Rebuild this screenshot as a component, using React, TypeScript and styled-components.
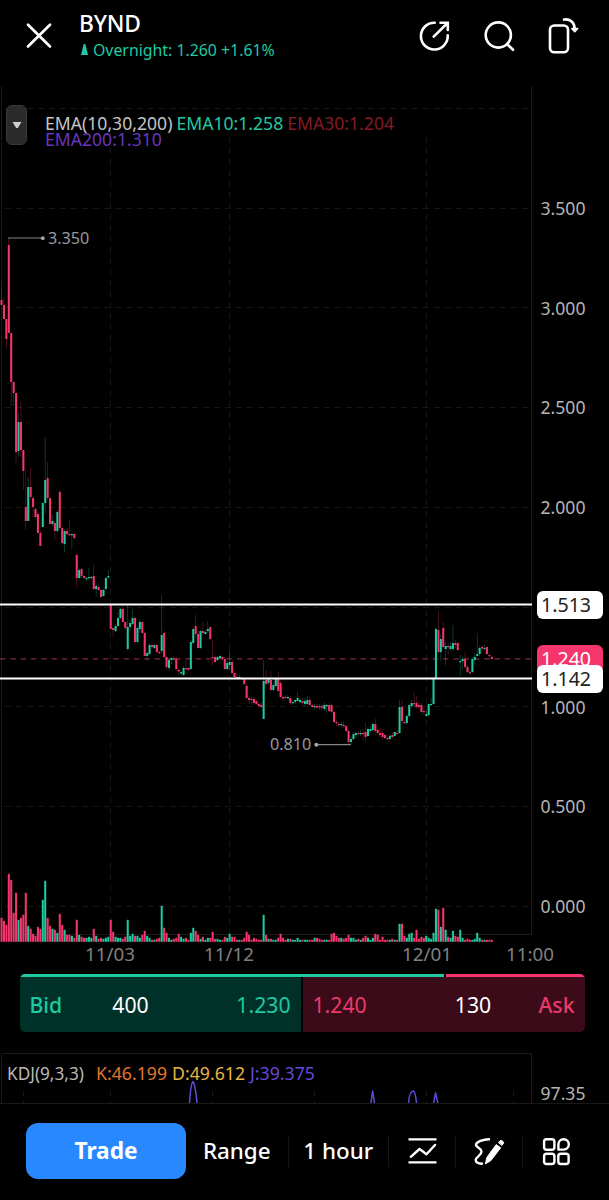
import React from "react";
import styled, { createGlobalStyle } from "styled-components";

const GREEN = "#1fc9a2";
const PINK = "#f4366c";

const GlobalStyle = createGlobalStyle`
  * { box-sizing: border-box; }
  body { margin: 0; background: #000; }
`;

const Screen = styled.main`
  width: 609px;
  height: 1200px;
  overflow: hidden;
  display: flex;
  flex-direction: column;
  background: #000;
  color: #fff;
  font-family: "Noto Sans", "Open Sans", sans-serif;
  white-space: nowrap;
`;

const Header = styled.header`
  flex: none;
  height: 86px;
  display: flex;
  align-items: flex-start;
  padding: 9px 29px 0 24px;
`;

const IconButton = styled.button<{ $w?: number; $h?: number }>`
  width: ${(p) => p.$w ?? 34}px;
  height: ${(p) => p.$h ?? 34}px;
  padding: 0;
  border: 0;
  background: none;
  color: #fff;
  display: flex;
  align-items: center;
  justify-content: center;

  svg {
    flex: none;
  }
`;

const CloseButton = styled(IconButton)`
  margin-top: 11px;
`;

const Title = styled.div`
  margin-left: 25px;
  margin-top: 2px;
  flex: 1;
`;

const Symbol = styled.h1`
  margin: 0;
  font-size: 22.8px;
  line-height: 26px;
  height: 26px;
  font-weight: 500;
  letter-spacing: -0.2px;
`;

const Overnight = styled.div`
  display: flex;
  align-items: center;
  gap: 5px;
  padding-left: 2px;
  margin-top: 2px;
  font-size: 15.85px;
  line-height: 22px;
  color: ${GREEN};
`;

const HeaderActions = styled.div`
  display: flex;
  gap: 30.5px;
  margin-top: 10px;
`;

const ChartRow = styled.section`
  position: relative;
  flex: none;
  height: 856px;
  display: grid;
  grid-template-columns: 532px 77px;
`;

const PriceAxis = styled.div`
  padding: 73px 0 0 8.5px;
  display: flex;
  flex-direction: column;
`;

const PriceLabel = styled.span<{ $hidden?: boolean }>`
  flex: none;
  height: 99.72px;
  line-height: 99.72px;
  font-size: 17.6px;
  color: #b6b6b6;
  visibility: ${(p) => (p.$hidden ? "hidden" : "visible")};
`;

const PriceTag = styled.span<{ $top: number; $live?: boolean }>`
  position: absolute;
  left: 537px;
  top: ${(p) => p.$top}px;
  width: 66px;
  height: 28px;
  padding-left: 4px;
  border-radius: 6px;
  font-size: 19.6px;
  line-height: 28px;
  color: ${(p) => (p.$live ? "#fff" : "#222")};
  background: ${(p) => (p.$live ? PINK : "#fff")};
`;

const CollapseButton = styled.button`
  position: absolute;
  left: 6px;
  top: 19px;
  width: 21px;
  height: 40px;
  padding: 0;
  border: 1px solid #393939;
  border-radius: 6px;
  background: #2b2b2b;
  display: grid;
  place-items: center;
`;

const EmaLegend = styled.div`
  position: absolute;
  left: 45px;
  top: 29px;
  width: 380px;
  display: flex;
  flex-wrap: wrap;
  column-gap: 4px;
  font-size: 17.6px;
  line-height: 16px;
`;

const LegendItem = styled.span<{ $color: string }>`
  color: ${(p) => p.$color};
`;

const TimeAxis = styled.div`
  flex: none;
  height: 32px;
  padding-left: 50px;
  display: grid;
  grid-template-columns: 120px 118px 80px 118px 88px;
  font-size: 18.8px;
  line-height: 24px;
  color: #808080;
  text-align: center;
`;

const TimeLabel = styled.span<{ $column: number }>`
  grid-column: ${(p) => p.$column};
`;

const Quote = styled.section`
  flex: none;
  width: 565px;
  height: 58px;
  margin-left: 19.5px;
  border-radius: 5px;
  overflow: hidden;
`;

const DepthBar = styled.div`
  display: grid;
  grid-template-columns: 424px 139px;
  gap: 2px;
  height: 3px;
`;

const DepthPart = styled.i<{ $color: string }>`
  background: ${(p) => p.$color};
`;

const QuoteSides = styled.div`
  display: grid;
  grid-template-columns: 281px 282px;
  gap: 2px;
  height: 55px;
`;

const QuoteSide = styled.div<{ $ask?: boolean }>`
  display: grid;
  grid-template-columns: ${(p) => (p.$ask ? "100px 1fr 41px" : "60px 82px 1fr")};
  align-items: center;
  padding: 0 10px;
  font-size: 21.2px;
  color: ${(p) => (p.$ask ? "#ea3a6c" : GREEN)};
  background: ${(p) => (p.$ask ? "#3b0b19" : "#003129")};
`;

const SideName = styled.span<{ $end?: boolean }>`
  font-weight: 500;
  text-align: ${(p) => (p.$end ? "right" : "left")};
`;

const Size = styled.span`
  color: #fff;
  text-align: center;
`;

const Price = styled.span<{ $end?: boolean }>`
  text-align: ${(p) => (p.$end ? "right" : "left")};
`;

const KdjPanel = styled.section`
  position: relative;
  flex: none;
  height: 50px;
  margin-top: 21px;
  display: grid;
  grid-template-columns: 532px 77px;
`;

const KdjLegend = styled.div`
  position: absolute;
  left: 7px;
  top: 9px;
  display: flex;
  gap: 5px;
  font-size: 17.7px;
  line-height: 23px;
`;

const KdjName = styled.span`
  width: 84px;
  font-size: 17.2px;
  color: #b9b9b9;
`;

const KdjAxis = styled.span`
  padding: 28px 0 0 8.5px;
  font-size: 17.6px;
  line-height: 24px;
  height: 50px;
  color: #b6b6b6;
`;

const Toolbar = styled.footer`
  flex: none;
  height: 97px;
  border-top: 1px solid #191919;
  display: grid;
  grid-template-columns: 160px 102.5px 100.5px 67px 67px 67px;
  padding: 19px 0 0 26px;
  align-items: start;
`;

const TradeButton = styled.button`
  height: 56px;
  border: 0;
  padding: 0;
  border-radius: 12px;
  background: #2888ff;
  color: #fff;
  font: 700 22.7px/56px "Noto Sans", sans-serif;
`;

const Tool = styled.button<{ $last?: boolean }>`
  position: relative;
  height: 32px;
  margin-top: 12px;
  padding: 0;
  border: 0;
  border-right: 1px solid ${(p) => (p.$last ? "transparent" : "#161616")};
  background: none;
  color: #fff;
  display: grid;
  place-items: center;
  font: 500 22.4px/32px "Noto Sans", sans-serif;
`;

/* One candle per entry: direction, body top, body bottom, wick top, wick bottom, volume bar height. */
const CANDLES = `
r 300 305 287 305 24|r 305 319 297 319 21|r 319 339 319 348 17|r 245 333 238 333 68|r 333 382 333 406 62
r 382 393 382 406 29|r 393 452 393 463 49|g 422 451 413 457 22|r 422 450 402 457 24|r 450 471 450 490 27
r 507 521 470 530 49|g 487 521 477 521 16|r 487 497 468 499 13|r 498 507 497 517 8|r 509 517 507 519 6
r 514 533 512 533 15|r 533 546 531 546 13|g 503 527 503 527 42|g 480 503 437 513 61|r 478 498 462 500 24
r 498 524 498 524 16|g 521 524 515 526 13|r 523 531 521 540 12|g 512 531 510 532 9|r 492 528 490 530 28
r 528 543 527 545 17|g 531 544 529 552 12|r 531 534 528 535 7|r 534 535 520 536 7|g 534 535 533 549 6
r 534 538 533 540 4|r 555 578 553 587 22|g 570 578 568 579 7|r 569 576 568 578 5|r 576 578 575 578 4
g 578 579 577 581 4|g 577 578 568 580 5|g 577 578 576 579 4|r 576 589 565 590 13|g 586 589 583 597 6
r 587 590 585 591 3|r 590 597 589 598 4|g 590 596 589 597 3|g 578 589 577 590 4|g 576 577.5 570 579 5
r 604 629 604 629 22|r 628 630 628 637 10|g 626 631 624 632 5|g 618 626 612 627 4|g 609 618 608 619 4
r 609 622 606 623 3|r 622 628 621 630 5|g 627 649 605 651 22|g 623 627 620 630 6|g 618 624 609 625 8
r 618 642 617 642 6|g 628 642 626 643 6|g 622 629 619 633 4|r 622 633 621 634 7|r 633 656 632 656 11
g 653 656 652 661 6|g 645 654 643 655 4|r 645 647 644 649 2|g 645 648 644 649 2|r 645 652 644 654 3
r 652 653 651 654 4|g 635 651 595 653 36|r 633 657 631 659 14|r 657 667 655 670 9|g 660 668 658 671 4
g 658 660 657 664 2|r 658 659.5 656 662 3|r 659 669 657 671 4|r 670 671.5 668 675 8|g 672 673.5 671 676 5
g 668 675 666 676 3|r 668 669 660 671 4|r 668 670 667 671 2|g 642 669 641 670 9|g 629 643 628 645 14
r 626 634 615 637 11|r 634 648 631 649 7|g 631 648 630 649 3|r 631 633 622 635 5|g 632 634 630 635 2
g 629 631 621 633 4|r 627 639 627 640 4|r 657 658 640 666 10|r 657 662 655 663 3|g 657 660 656 661 3
g 656 658 655 659 2|r 657 659 656 661 2|r 659 669 657 670 5|g 663 669 661 671 4|g 662 665 650 670 8
r 662 673 660 675 5|r 673 677 671 678 5|r 677 678.5 673 679 2|g 677 678 675 679 2|r 678 679 676 680 2
r 679 684 678 685 4|r 686 698 684 699 10|r 698 700 697 704 7|r 699 700 697 705 2|r 699 703 697 705 4
r 701 704 700 705 3|r 704 706 702 708 2|r 705 707 702 708 2|g 681 719 660 719 27|r 680 684 670 686 7
g 679 683 677 685 3|r 680 690 671 691 3|g 685 690 683 691 2|g 678 686 677 687 2|r 678 691 672 692 4
r 683 697 681 698 8|r 697 698.5 696 701 4|r 697 698 695 699 2|g 697 698 695 699 3|r 698 703 696 705 3
g 702 703 700 705 2|g 700 702 699 704 2|g 698 701 692 702 4|g 700 702 698 704 2|r 701 703 698 706 2
g 701 704 698 706 2|g 700 704 696 705 2|r 700 705 697 706 2|r 705 707 703 708 2|g 706 707 704 709 4
r 706 707.5 704 709 4|r 706 707.5 704 710 3|r 706 707.5 704 710 2|g 705 709 702 711 2|g 705 706 704 713 2
r 705 711 703 712 2|r 705 712 704 713 8|r 712 722 711 723 9|r 722 723 720 726 6|r 724 725 722 727 4
g 724 725 722 728 4|r 725 726 721 728 3|r 726 731 724 732 4|r 731 742 729 744 7|g 739 742 736 744 4
g 734 739 732 740 4|g 733 735 732 738 2|r 733 734 731 735 3|g 733 734 730 736 2|r 733 734 729 740 4
r 732 737 723 741 6|g 729 736 727 737 4|g 729 731 726 733 2|g 724 730 722 732 4|r 724 731 719 733 8
r 730 733 728 735 7|r 733 735 728 737 2|r 733 737 729 739 5|r 735 738 734 739 2|r 738 739 736 740 2
g 736 739 734 740 2|r 735 737 733 739 3|g 732 736 731 737 2|r 733 734 730 735 2|g 707 733 700 734 18
r 707 721 700 724 18|r 722 723 720 724 6|g 716 723 714 725 4|g 705 716 704 718 8|g 703 706 700 708 9
r 703 704 693 708 4|r 703 707 696 709 12|r 705 707 702 709 3|r 705 712 703 713 5|r 711 712 708 715 4
g 714 716 711 717 6|g 704 715 703 717 4|g 704 705 698 706 3|g 678 704 677 705 9|g 629 678 628 679 33
r 630 652 611 654 32|g 639 652 634 661 15|r 628 647 622 648 34|g 646 649 642 665 12|r 646 647 643 655 5
g 646 649 642 651 4|g 643 649 625 651 11|r 643 645 640 648 6|r 643 650 642 651 5|g 661 662 655 676 12
g 659 661 657 670 4|r 659 667 652 668 2|r 667 672 665 673 3|r 672 673 670 675 2|g 659 672 657 673 2
g 657 660 653 665 3|g 654 656 633 657 9|g 648 654 646 656 4|r 647 648.5 645 653 2|g 648 649 645 650 2
r 647 654 646 655 2|r 655 656 653 657 2|r 657 659 656 660 2`
  .trim()
  .split(/[\n|]/)
  .map((line) => {
    const [dir, ...values] = line.split(" ");
    const [top, bottom, high, low, volume] = values.map(Number);
    return { up: dir === "g", top, bottom, high, low, volume };
  });

const candleX = (i: number) => 1.5 + i * 2.427;

/* The plot uses screen rows, so its view box starts where the header ends. */
const PricePlot = () => (
  <svg width="532" height="856" viewBox="0 86 532 856">
    <g stroke="#161616" strokeWidth="1" fill="none">
      <path d="M1.5 86V942M531.5 86V935M0 934.5H532" stroke="#1a1a1a" />
      <g strokeDasharray="6 5">
        {[108.5, 208.5, 307.5, 407.5, 507.5, 607.5, 706.5, 806.5, 906.5].map((y) => (
          <path key={y} d={`M5 ${y}H531`} />
        ))}
        {[110.5, 229.5, 426.5].map((x) => (
          <path key={x} d={`M${x} 137V934`} />
        ))}
      </g>
    </g>
    <path d="M0 658.8H532" stroke="#7c2940" strokeWidth="1.3" strokeDasharray="5.5 4.8" />
    {CANDLES.map((c, i) => {
      const x = candleX(i);
      const color = c.up ? GREEN : PINK;
      return (
        <g key={i} fill={color}>
          <rect x={x - 0.35} y={c.high} width="0.7" height={c.low - c.high} opacity="0.4" />
          <rect x={x - 1} y={c.top} width="2.05" height={Math.max(1.2, c.bottom - c.top)} />
          <rect x={x - 1} y={941.8 - c.volume} width="2.05" height={c.volume} />
        </g>
      );
    })}
    <path d="M0 604.5H532M0 678.5H532" stroke="#fff" strokeWidth="1.8" />
    <g stroke="#85858a" fill="#a5a5aa">
      <path d="M8 238H42M316 744.7H351" strokeWidth="1.2" />
      <circle cx="42.8" cy="238.2" r="1.9" stroke="none" />
      <circle cx="316.3" cy="744.7" r="2" stroke="none" />
    </g>
    <g fill="#98989d" fontSize="16.2">
      <text x="48" y="244">3.350</text>
      <text x="270" y="750.3">0.810</text>
    </g>
  </svg>
);

const KdjPlot = () => (
  <svg width="532" height="50" viewBox="0 1053 532 50">
    <g stroke="#1a1a1a" fill="none">
      <path d="M1.5 1103V1053.5H531.5V1103" />
      <path
        d="M23.5 1091V1103M110.5 1091V1103M212.5 1091V1103M314.5 1091V1103M426.5 1091V1103M513.5 1091V1103"
        strokeDasharray="5 5"
      />
    </g>
    <g stroke="#6349d8" strokeWidth="1.5" fill="none" strokeLinejoin="round">
      <path d="M189.5 1103C190 1095 191.5 1083 193 1081.5C194.5 1083 196.5 1095 197 1103" />
      <path d="M371 1103L372.6 1091L374.5 1103" />
      <path d="M408.5 1103C409 1096 410.5 1091 413.6 1091C415 1092 416 1098 416.6 1103" />
      <path d="M433.5 1103L435.6 1093L437.8 1103" />
    </g>
  </svg>
);

const stroke = { fill: "none", stroke: "currentColor", strokeLinecap: "round", strokeLinejoin: "round" } as const;

const CloseIcon = () => (
  <svg width="30" height="30" viewBox="24 20.5 30 30" {...stroke} strokeWidth="2.7">
    <path d="M28 25.2L50 47M50 25.2L28 47" />
  </svg>
);

const ShareIcon = () => (
  <svg width="34" height="34" viewBox="417 19 34 34" {...stroke} strokeWidth="2.6">
    <path d="M434.7 22.7A13.4 13.4 0 1 0 447.7 35.2" />
    <path d="M433.7 36.7L447 23.5M440.5 22.7H447.8V30" strokeLinejoin="miter" />
  </svg>
);

const SearchIcon = () => (
  <svg width="34" height="34" viewBox="482 19 34 34" {...stroke} strokeWidth="2.6">
    <circle cx="498.3" cy="35" r="12.6" />
    <path d="M507.2 44.2L513 49.8" />
  </svg>
);

const RotateIcon = () => (
  <svg width="36" height="40" viewBox="545 16 36 40" {...stroke} strokeWidth="2.6">
    <rect x="550" y="25.5" width="18" height="26.7" rx="4.2" />
    <path d="M564 19.5C570.5 18.8 574.5 22.5 574.7 29" />
    <path d="M572 28.6H577.5L574.7 31.5Z" fill="currentColor" strokeWidth="1.8" />
  </svg>
);

const IndicatorIcon = () => (
  <svg width="32" height="28" viewBox="405 1137 32 28" {...stroke} strokeWidth="2.4">
    <path d="M407.5 1139.4H435.5M407.5 1162.4H435.5" strokeLinecap="butt" />
    <path d="M409.8 1156.8L418.5 1149L425.5 1154.2L434 1145" />
  </svg>
);

const DrawIcon = () => (
  <svg width="34" height="32" viewBox="472 1134 34 32" {...stroke} strokeWidth="2.4">
    <path d="M489 1138.2C483 1138.3 476.5 1141 476 1143.5C475.5 1146.5 481.5 1147 481.5 1150.5C481.5 1155 475.7 1155.5 475.7 1159C475.7 1161.800 479 1162.6 482 1162.7" />
    <path d="M485.5 1162.5L486.8 1156.5L496.2 1143.6L500.7 1146.8L490.9 1159.5Z" fill="currentColor" strokeWidth="1" />
    <path d="M498.7 1141.3L500.1 1139.7Q501.2 1139.1 502.3 1139.9L503.2 1140.7Q504.1 1141.6 503.3 1142.7L502.1 1144.2Z" fill="currentColor" strokeWidth="1" />
  </svg>
);

const WidgetsIcon = () => (
  <svg width="30" height="30" viewBox="541 1136 30 30" {...stroke} strokeWidth="2.4">
    <rect x="544.1" y="1139.2" width="10.3" height="10.5" rx="2.5" />
    <path d="M558.4 1149.6V1144.5A5.2 5.2 0 1 1 563.7 1149.6Z" />
    <rect x="544.1" y="1153.7" width="10.3" height="10.3" rx="2.5" />
    <rect x="558.3" y="1153.7" width="10.3" height="10.3" rx="2.5" />
  </svg>
);

export default function App() {
  return (
    <Screen>
      <GlobalStyle />
      <Header>
        <CloseButton $w={30} $h={30} aria-label="Close">
          <CloseIcon />
        </CloseButton>
        <Title>
          <Symbol>BYND</Symbol>
          <Overnight>
            <svg width="7" height="12" viewBox="0 0 7 12" fill={GREEN}>
              <path d="M2.7 0H4.3L7 11H0Z" />
            </svg>
            Overnight: 1.260 +1.61%
          </Overnight>
        </Title>
        <HeaderActions>
          <IconButton aria-label="Share">
            <ShareIcon />
          </IconButton>
          <IconButton aria-label="Search">
            <SearchIcon />
          </IconButton>
          <IconButton aria-label="Rotate">
            <RotateIcon />
          </IconButton>
        </HeaderActions>
      </Header>

      <ChartRow>
        <PricePlot />
        <PriceAxis>
          {["3.500", "3.000", "2.500", "2.000", "", "1.000", "0.500", "0.000"].map((label) => (
            <PriceLabel key={label} $hidden={!label}>
              {label}
            </PriceLabel>
          ))}
        </PriceAxis>
        <CollapseButton aria-label="Collapse indicators">
          <svg width="10" height="8" viewBox="0 0 10 8" fill="#d0d0d0">
            <path d="M0.5 1H9.5L5.8 7H4.2Z" />
          </svg>
        </CollapseButton>
        <EmaLegend>
          <LegendItem $color="#c4c4c4">EMA(10,30,200)</LegendItem>
          <LegendItem $color="#23c8a1">EMA10:1.258</LegendItem>
          <LegendItem $color="#861a22">EMA30:1.204</LegendItem>
          <LegendItem $color="#6836bd">EMA200:1.310</LegendItem>
        </EmaLegend>
        <PriceTag $top={505}>1.513</PriceTag>
        <PriceTag $top={559} $live>
          1.240
        </PriceTag>
        <PriceTag $top={578.5}>1.142</PriceTag>
      </ChartRow>

      <TimeAxis>
        <TimeLabel $column={1}>11/03</TimeLabel>
        <TimeLabel $column={2}>11/12</TimeLabel>
        <TimeLabel $column={4}>12/01</TimeLabel>
        <TimeLabel $column={5}>11:00</TimeLabel>
      </TimeAxis>

      <Quote>
        <DepthBar>
          <DepthPart $color={GREEN} />
          <DepthPart $color={PINK} />
        </DepthBar>
        <QuoteSides>
          <QuoteSide>
            <SideName>Bid</SideName>
            <Size>400</Size>
            <Price $end>1.230</Price>
          </QuoteSide>
          <QuoteSide $ask>
            <Price>1.240</Price>
            <Size>130</Size>
            <SideName $end>Ask</SideName>
          </QuoteSide>
        </QuoteSides>
      </Quote>

      <KdjPanel>
        <KdjPlot />
        <KdjAxis>97.35</KdjAxis>
        <KdjLegend>
          <KdjName>KDJ(9,3,3)</KdjName>
          <LegendItem $color="#e0762f">K:46.199</LegendItem>
          <LegendItem $color="#e5b545">D:49.612</LegendItem>
          <LegendItem $color="#6349d8">J:39.375</LegendItem>
        </KdjLegend>
      </KdjPanel>

      <Toolbar>
        <TradeButton>Trade</TradeButton>
        <Tool>Range</Tool>
        <Tool>1 hour</Tool>
        <Tool aria-label="Indicators">
          <IndicatorIcon />
        </Tool>
        <Tool aria-label="Draw">
          <DrawIcon />
        </Tool>
        <Tool aria-label="Widgets" $last>
          <WidgetsIcon />
        </Tool>
      </Toolbar>
    </Screen>
  );
}
